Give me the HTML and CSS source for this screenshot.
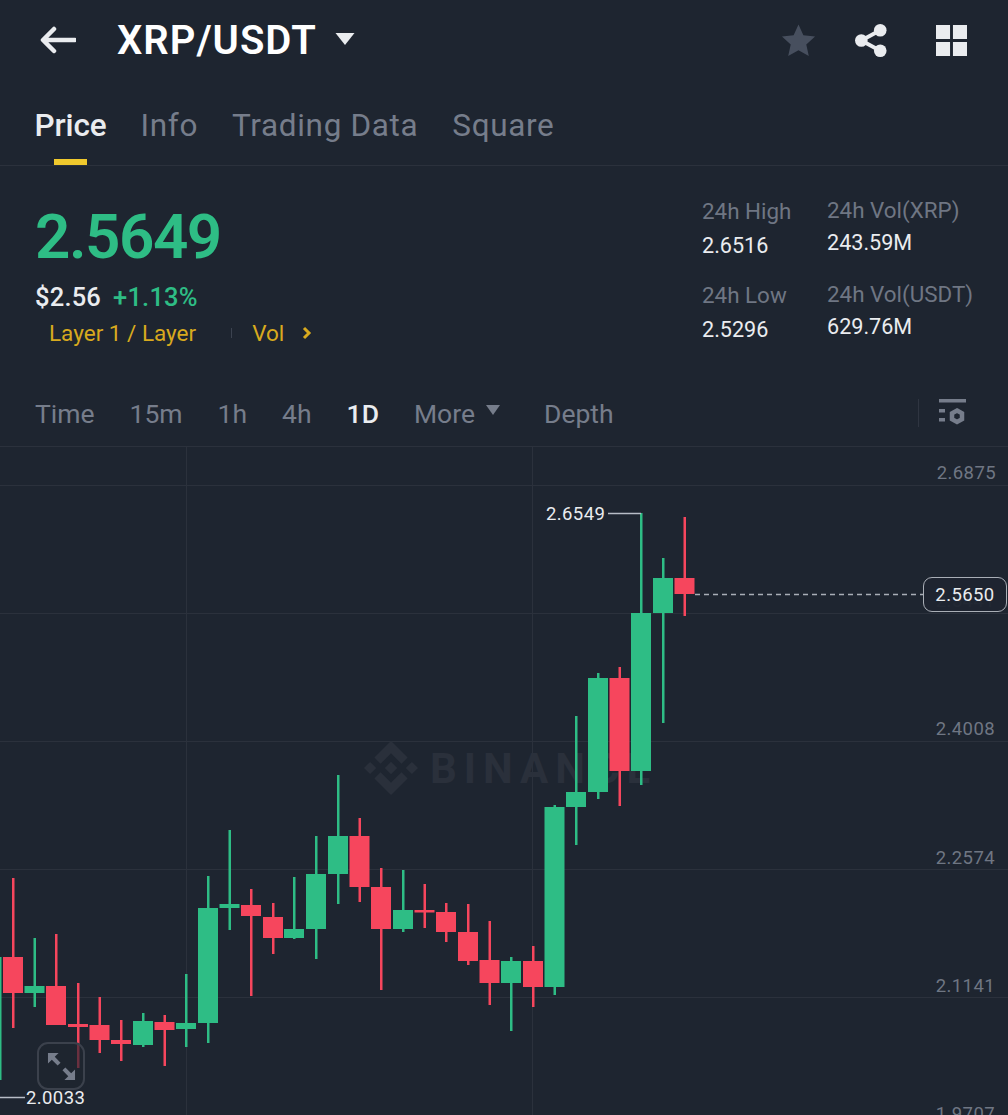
FILE: index.html
```html
<!DOCTYPE html>
<html lang="en">
<head>
<meta charset="utf-8">
<title>XRP/USDT</title>
<link rel="stylesheet" href="styles.css">
</head>
<body>
<main class="screen">
  <header class="topbar">
    <svg class="back" viewBox="0 0 36 28"><path d="M14 3 3 14l11 11M4 14h31"/></svg>
    <h1 class="pair">XRP/USDT</h1>
    <svg class="pair-caret" viewBox="0 0 22 14"><path d="M1.500 1h19l-9.500 12z"/></svg>
    <div class="top-actions">
      <svg class="star" viewBox="0 0 36 34"><path d="M18 1l5 11 12 1.500-9 8 2.600 12L18 27.500 7.400 33.500 10 21.500l-9-8L13 12z"/></svg>
      <svg class="share" viewBox="0 0 34 34"><circle cx="26" cy="6.500" r="6.500"/><circle cx="26" cy="27.500" r="6.500"/><circle cx="6.500" cy="17" r="6.500"/><path d="M26 6.500 6.500 17 26 27.500"/></svg>
      <svg class="apps" viewBox="0 0 32 32"><path d="M0 0h14.500v14.500H0zM17.500 0H32v14.500H17.500zM0 17.500h14.500V32H0zM17.500 17.500H32V32H17.500z"/></svg>
    </div>
  </header>

  <nav class="tabs">
    <a class="tab tab-active">Price</a>
    <a class="tab">Info</a>
    <a class="tab">Trading Data</a>
    <a class="tab">Square</a>
  </nav>

  <section class="stats">
    <div class="quote">
      <div class="last">2.5649</div>
      <div class="sub"><span class="usd">$2.56</span><span class="chg">+1.13%</span></div>
      <div class="tags">
        <span>Layer 1 / Layer</span>
        <i class="tag-sep"></i>
        <span>Vol</span>
        <svg class="tag-chev" viewBox="0 0 10 14"><path d="M2 2l5 5-5 5"/></svg>
      </div>
    </div>
    <div class="metrics">
      <div class="metric-col">
        <div class="metric"><span class="m-label">24h High</span><span class="m-value">2.6516</span></div>
        <div class="metric"><span class="m-label">24h Low</span><span class="m-value">2.5296</span></div>
      </div>
      <div class="metric-col metric-col-b">
        <div class="metric"><span class="m-label">24h Vol(XRP)</span><span class="m-value">243.59M</span></div>
        <div class="metric"><span class="m-label">24h Vol(USDT)</span><span class="m-value">629.76M</span></div>
      </div>
    </div>
  </section>

  <div class="intervals">
    <span>Time</span>
    <span>15m</span>
    <span>1h</span>
    <span>4h</span>
    <span class="iv-active">1D</span>
    <span class="iv-more">More<svg class="iv-caret" viewBox="0 0 14 10"><path d="M0 0h14L7 10z"/></svg></span>
    <span class="iv-depth">Depth</span>
    <i class="iv-sep"></i>
    <svg class="iv-settings" viewBox="0 0 27 28"><path class="fill" d="M0 0h27v3.500H0zM0 10h6v3.500H0zM0 19h6v3.500H0z"/><path class="gear" d="M18 11.500l5 2.900v5.700l-5 2.900-5-2.900v-5.700z"/></svg>
  </div>

  <section class="chart">
    <svg class="plot" viewBox="0 446 1008 669">
      <g class="grid">
        <path d="M0 446.500H1008M0 485.500H1008M0 613.500H1008M0 741.500H1008M0 869.500H1008M0 997.500H1008M186.500 447V1115M532.500 447V1115"/>
      </g>
      <g class="mark">
        <svg x="364" y="741" width="54" height="54" viewBox="0 0 126.610 126.610"><path d="M38.730 53.200l24.590-24.580 24.600 24.600 14.300-14.310L63.320 0 24.420 38.900zM0 63.310l14.300-14.310 14.310 14.310-14.310 14.300zM38.730 73.410l24.590 24.590 24.600-24.600 14.310 14.290-38.900 38.910-38.910-38.880zM98 63.310l14.300-14.310 14.310 14.300-14.310 14.320zM77.830 63.300L63.320 48.780 52.590 59.510l-1.240 1.230-2.540 2.540 14.510 14.500 14.510-14.510z"/></svg>
        <text x="430" y="783" class="mark-text">BINANCE</text>
      </g>
      <g class="up">
        <rect x="-1" y="957" width="2.500" height="123"/>
        <rect x="33.500" y="938" width="2.500" height="69"/><rect x="24.500" y="986" width="20" height="7"/>
        <rect x="142" y="1013" width="2.500" height="34"/><rect x="133" y="1021" width="20" height="24"/>
        <rect x="185" y="974" width="2.500" height="73"/><rect x="176" y="1023" width="20" height="6"/>
        <rect x="207" y="876" width="2.500" height="167"/><rect x="198" y="908" width="20" height="115"/>
        <rect x="228.500" y="830" width="2.500" height="100"/><rect x="219.500" y="904" width="20" height="4"/>
        <rect x="293" y="877" width="2.500" height="62"/><rect x="284" y="929" width="20" height="9"/>
        <rect x="315" y="836" width="2.500" height="123"/><rect x="306" y="874" width="20" height="55"/>
        <rect x="337" y="775" width="2.500" height="129"/><rect x="328" y="836" width="20" height="38"/>
        <rect x="402" y="870" width="2.500" height="62"/><rect x="393" y="910" width="20" height="19"/>
        <rect x="510" y="957" width="2.500" height="74"/><rect x="501" y="961" width="20" height="22"/>
        <rect x="553.500" y="805" width="2.500" height="190"/><rect x="544.500" y="807" width="20" height="180"/>
        <rect x="575" y="716" width="2.500" height="129"/><rect x="566" y="792" width="20" height="15"/>
        <rect x="597" y="673" width="2.500" height="126"/><rect x="588" y="678" width="20" height="114"/>
        <rect x="640" y="513" width="2.500" height="272"/><rect x="631" y="613" width="20" height="158"/>
        <rect x="662" y="558" width="2.500" height="165"/><rect x="653" y="578" width="20" height="35"/>
      </g>
      <g class="down">
        <rect x="12" y="878" width="2.500" height="150"/><rect x="3" y="957" width="20" height="36"/>
        <rect x="55" y="934" width="2.500" height="90"/><rect x="46" y="986" width="20" height="39"/>
        <rect x="77" y="983" width="2.500" height="85"/><rect x="68" y="1024" width="20" height="3"/>
        <rect x="98.500" y="997" width="2.500" height="56"/><rect x="89.500" y="1025" width="20" height="15"/>
        <rect x="120" y="1020" width="2.500" height="41"/><rect x="111" y="1040" width="20" height="4"/>
        <rect x="163.500" y="1015" width="2.500" height="51"/><rect x="154.500" y="1022" width="20" height="8"/>
        <rect x="250" y="889" width="2.500" height="107"/><rect x="241" y="905" width="20" height="11"/>
        <rect x="272" y="903" width="2.500" height="51"/><rect x="263" y="917" width="20" height="21"/>
        <rect x="358.500" y="818" width="2.500" height="84"/><rect x="349.500" y="836" width="20" height="51"/>
        <rect x="380" y="868" width="2.500" height="122"/><rect x="371" y="887" width="20" height="42"/>
        <rect x="423.500" y="884" width="2.500" height="44"/><rect x="414.500" y="910" width="20" height="2.500"/>
        <rect x="445" y="903" width="2.500" height="39"/><rect x="436" y="912" width="20" height="20"/>
        <rect x="467" y="904" width="2.500" height="61"/><rect x="458" y="932" width="20" height="29"/>
        <rect x="488.500" y="921" width="2.500" height="84"/><rect x="479.500" y="960" width="20" height="23"/>
        <rect x="532" y="946" width="2.500" height="61"/><rect x="523" y="961" width="20" height="26"/>
        <rect x="618.500" y="667" width="2.500" height="139"/><rect x="609.500" y="678" width="20" height="93"/>
        <rect x="683.500" y="517" width="2.500" height="99"/><rect x="674.500" y="578" width="20" height="16"/>
      </g>
      <path class="leader" d="M608 513.500H641M0 1097.500H25"/>
      <path class="last-line" d="M695 594.500H923"/>
    </svg>

    <span class="axis a1">2.6875</span>
    <span class="axis a2">2.5441</span>
    <span class="axis a3">2.4008</span>
    <span class="axis a4">2.2574</span>
    <span class="axis a5">2.1141</span>
    <span class="axis a6">1.9707</span>
    <span class="extreme hi">2.6549</span>
    <span class="extreme lo">2.0033</span>
    <span class="price-tag">2.5650</span>
    <button class="expand" aria-label="Expand">
      <svg viewBox="0 0 30 30"><path d="M1 1h11L8 5l6 6-3 3-6-6-4 4zM29 29H18l4-4-6-6 3-3 6 6 4-4z"/></svg>
    </button>
  </section>
</main>
</body>
</html>
```

FILE: styles.css
```css
* { box-sizing: border-box; }
html, body { margin: 0; padding: 0; background: #1e2530; }
.screen {
  width: 1008px;
  height: 1115px;
  overflow: hidden;
  display: flex;
  flex-direction: column;
  font-family: Roboto, "Noto Sans", sans-serif;
  color: #eaecef;
}

/* top bar */
.topbar {
  height: 82px;
  flex: none;
  display: flex;
  align-items: center;
  padding: 0 41px 2px 40px;
}
.back { width: 36px; height: 28px; flex: none; }
.back path { fill: none; stroke: #eaecef; stroke-width: 4.500; stroke-linecap: round; stroke-linejoin: round; }
.pair { margin: 2px 0 0 41px; font-size: 40px; font-weight: 600; line-height: 46px; color: #fff; letter-spacing: 1px; }
.pair-caret { width: 22px; height: 14px; margin: 0 0 2px 17px; fill: #eaecef; flex: none; }
.top-actions { margin-left: auto; display: flex; align-items: center; }
.star { width: 35px; height: 34px; fill: #474f5e; }
.share { width: 33px; height: 33px; margin-left: 39px; fill: #eaecef; }
.share path { fill: none; stroke: #eaecef; stroke-width: 4; }
.apps { width: 31px; height: 31px; margin-left: 48px; fill: #eaecef; }

/* tabs */
.tabs {
  height: 84px;
  flex: none;
  display: flex;
  gap: 34px;
  padding-left: 34.500px;
  border-bottom: 1px solid #2b313c;
}
.tab { position: relative; font-size: 31.500px; line-height: 35px; padding-top: 26px; color: #767d8b; letter-spacing: .65px; white-space: nowrap; }
.tab-active { color: #eaecef; font-weight: 500; letter-spacing: -.1px; }
.tab-active::after {
  content: "";
  position: absolute;
  left: 19px;
  bottom: 0;
  width: 33px;
  height: 6px;
  background: #f0c92d;
}

/* stats */
.stats {
  height: 213px;
  flex: none;
  display: flex;
  justify-content: space-between;
  padding: 0 36px 0 35px;
}
.quote { padding-top: 36px; }
.last { font-size: 62px; font-weight: 600; line-height: 70px; color: #2ebd85; letter-spacing: -1.500px; }
.sub { display: flex; gap: 12px; font-size: 25.500px; line-height: 30px; margin-top: 10px; letter-spacing: .2px; }
.usd { color: #eaecef; font-weight: 500; }
.chg { color: #2ebd85; font-weight: 500; }
.tags { display: flex; align-items: center; margin: 7px 0 0 14px; font-size: 22.500px; line-height: 28px; color: #d8aa1e; }
.tag-sep { width: 1px; height: 10px; margin: 0 20px 0 35px; background: #3c4350; }
.tag-chev { width: 10px; height: 14px; margin-left: 18px; }
.tag-chev path { fill: none; stroke: #d8aa1e; stroke-width: 3; }
.metrics { display: flex; gap: 37px; padding-top: 31px; }
.metric-col { width: 88px; }
.metric-col-b { width: 145px; margin-top: -1px; }
.metric { display: flex; flex-direction: column; height: 84px; white-space: nowrap; }
.m-label { font-size: 22.400px; line-height: 28px; color: #6f7683; }
.m-value { font-size: 21.600px; line-height: 28px; margin-top: 7px; color: #eaecef; }
.metric-col-b .m-value { margin-top: 5px; }

/* interval bar */
.intervals {
  height: 67px;
  flex: none;
  display: flex;
  align-items: center;
  gap: 35px;
  padding: 1px 42px 0 35px;
  font-size: 26.500px;
  color: #767d8b;
}
.iv-active { color: #eaecef; font-weight: 500; }
.iv-more { display: flex; align-items: center; gap: 11px; }
.iv-caret { width: 14px; height: 10px; fill: #767d8b; margin-bottom: 6px; }
.iv-depth { margin-left: 9px; }
.iv-sep { width: 1px; height: 28px; margin-left: auto; background: #2f3541; }
.iv-settings { width: 27px; height: 28px; margin-left: -15px; }
.iv-settings .fill { fill: #767d8b; }
.iv-settings .gear { fill: none; stroke: #767d8b; stroke-width: 4.500; }

/* chart */
.chart { position: relative; flex: 1; min-height: 0; overflow: hidden; }
.plot { position: absolute; left: 0; top: 0; width: 1008px; height: 669px; display: block; }
.grid path { fill: none; stroke: #2b313c; stroke-width: 1; }
.mark { fill: #2a303b; }
.mark-text { font-family: Roboto, sans-serif; font-size: 42px; font-weight: 700; letter-spacing: 7px; }
.up { fill: #2ebd85; }
.down { fill: #f6465d; }
.leader { fill: none; stroke: #b7bdc6; stroke-width: 1.500; }
.last-line { fill: none; stroke: #a9aeb6; stroke-width: 1.500; stroke-dasharray: 5 4; }

.axis { position: absolute; right: 13px; font-size: 18.500px; line-height: 22px; color: #6f7683; letter-spacing: .4px; }
.a1 { top: 16px; right: 12px; }
.a2 { top: 144px; opacity: .35; }
.a3 { top: 272px; }
.a4 { top: 401px; }
.a5 { top: 529px; }
.a6 { top: 657px; }
.extreme { position: absolute; font-size: 18.500px; line-height: 22px; color: #eaecef; letter-spacing: .4px; }
.hi { left: 546px; top: 57px; }
.lo { left: 26px; top: 641px; }
.price-tag {
  position: absolute;
  left: 923px;
  top: 131px;
  width: 84px;
  height: 35px;
  display: flex;
  align-items: center;
  justify-content: center;
  border: 1.500px solid #a9aeb6;
  border-radius: 9px;
  background: rgba(30, 37, 48, .85);
  font-size: 18.500px;
  letter-spacing: .4px;
  color: #eaecef;
}
.expand {
  position: absolute;
  left: 37px;
  top: 596px;
  width: 48px;
  height: 48px;
  padding: 0;
  display: flex;
  align-items: center;
  justify-content: center;
  background: rgba(30, 37, 48, .65);
  border: 2px solid #3b414c;
  border-radius: 11px;
}
.expand svg { width: 29px; height: 29px; fill: #767d8b; }
```
